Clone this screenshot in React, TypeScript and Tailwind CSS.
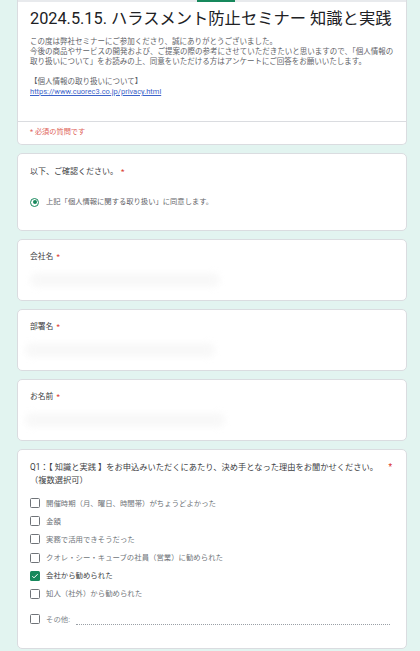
import React from "react";

const Req = () => <span className="text-[#d93025] ml-[3px]">*</span>;

function Blur({ w, ml = 0 }: { w: number; ml?: number }) {
  return (
    <div className="h-[16px] flex items-center" style={{ marginLeft: ml }}>
      <div
        className="h-[14px] rounded-full bg-[#f8f8f8] blur-[3px]"
        style={{ width: w }}
      />
    </div>
  );
}

function Check({ checked = false }: { checked?: boolean }) {
  return checked ? (
    <div className="w-[10px] h-[10px] rounded-[1.5px] bg-[#17885c] flex items-center justify-center">
      <svg width="8" height="8" viewBox="0 0 24 24" fill="none">
        <path d="M4 12.5l5 5L20 6.5" stroke="#fff" strokeWidth="3" />
      </svg>
    </div>
  ) : (
    <div className="w-[10px] h-[10px] rounded-[1.5px] border-[1.3px] border-[#6f7378]" />
  );
}

const options = [
  "開催時期（月、曜日、時間帯）がちょうどよかった",
  "金額",
  "実務で活用できそうだった",
  "クオレ・シー・キューブの社員（営業）に勧められた",
  "会社から勧められた",
  "知人（社外）から勧められた",
];

export default function App() {
  return (
    <div className="w-[420px] h-[651px] overflow-hidden bg-[#e2f4f0] px-[17px] font-[Roboto,'Noto_Sans_CJK_JP',sans-serif] text-[#202124]">
      <div className="w-[390px] flex flex-col gap-2">
        {/* header card */}
        <div className="bg-white rounded-b-[5px] border-x border-b border-[#dadce0] h-[145px] flex flex-col">
          <div className="h-[2px] bg-[#e8eaed] flex">
            <div className="ml-[179px] w-[38px] bg-[#17885c]" />
          </div>
          <div className="px-[12px] mt-[7px] text-[16.3px] leading-[20px] whitespace-nowrap">
            2024.5.15. ハラスメント防止セミナー 知識と実践
          </div>
          <div className="px-[12px] mt-[8px] text-[7.5px] leading-[10px] text-[#5f6368]">
            <div>この度は弊社セミナーにご参加くださり、誠にありがとうございました。</div>
            <div>
              今後の商品やサービスの開発および、ご提案の際の参考にさせていただきたいと思いますので、「個人情報の
            </div>
            <div>取り扱いについて」をお読みの上、同意をいただける方はアンケートにご回答をお願いいたします。</div>
            <div className="h-[10px]" />
            <div>【個人情報の取り扱いについて】</div>
            <div className="text-[#3b63c9] underline">https://www.cuorec3.co.jp/privacy.html</div>
          </div>
          <div className="mt-[24px] border-t border-[#dadce0]" />
          <div className="px-[12px] mt-[5px] text-[7.2px] leading-[10px] text-[#e0645a]">
            * 必須の質問です
          </div>
        </div>

        {/* confirm card */}
        <div className="bg-white rounded-[5px] border border-[#dadce0] h-[78px] px-[12px] pt-[12px]">
          <div className="text-[8px] leading-[12px] text-[#3c4043]">
            以下、ご確認ください。
            <Req />
          </div>
          <div className="mt-[18px] flex items-center h-[12px]">
            <div className="w-[9px] h-[9px] rounded-full border-[1.3px] border-[#17885c] flex items-center justify-center">
              <div className="w-[4px] h-[4px] rounded-full bg-[#17885c]" />
            </div>
            <span className="ml-[7px] text-[7.3px] text-[#5f6368]">
              上記「個人情報に関する取り扱い」に同意します。
            </span>
          </div>
        </div>

        {/* text inputs */}
        {[
          { label: "会社名", w: 190, ml: 0 },
          { label: "部署名", w: 190, ml: -5 },
          { label: "お名前", w: 200, ml: -5 },
        ].map((f) => (
          <div
            key={f.label}
            className="bg-white rounded-[5px] border border-[#dadce0] h-[62px] px-[12px] pt-[11px]"
          >
            <div className="text-[7.8px] leading-[12px] text-[#3c4043]">
              {f.label}
              <Req />
            </div>
            <div className="mt-[9px]">
              <Blur w={f.w} ml={f.ml} />
            </div>
          </div>
        ))}

        {/* Q1 card */}
        <div className="bg-white rounded-[5px] border border-[#dadce0] h-[200px] px-[12px] pt-[11px]">
          <div className="flex text-[8.25px] leading-[13px] text-[#3c4043]">
            <div className="flex-1">
              <div className="whitespace-nowrap">
                Q1：【 知識と実践 】をお申込みいただくにあたり、決め手となった理由をお聞かせください。
              </div>
              <div>（複数選択可）</div>
            </div>
            <span className="text-[#d93025] mr-[2px]">*</span>
          </div>
          <div className="mt-[7px] flex flex-col">
            {options.map((o, i) => (
              <div key={o} className="h-[18.2px] flex items-center">
                <Check checked={i === 4} />
                <span className={"ml-[6px] text-[7.4px] " + (i === 4 ? "text-[#3c4043]" : "text-[#70757a]")}>{o}</span>
              </div>
            ))}
            <div className="mt-[7px] h-[18px] flex items-center">
              <Check />
              <span className="ml-[6px] text-[7.4px] text-[#80868b]">その他:</span>
              <div className="ml-[6px] flex-1 mr-[4px] self-end mb-[3px] border-b border-dotted border-[#9aa0a6]" />
            </div>
          </div>
        </div>
      </div>
    </div>
  );
}
